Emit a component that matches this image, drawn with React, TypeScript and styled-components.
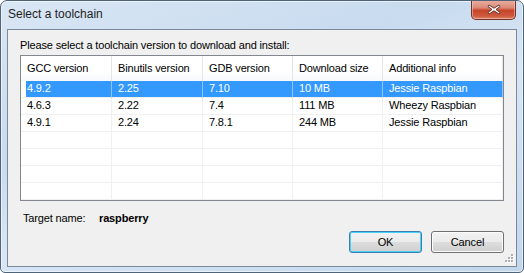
import React from 'react'
import styled, { createGlobalStyle } from 'styled-components'

const GlobalStyle = createGlobalStyle`
html, body {
  margin: 0;
  padding: 0;
  background: #ffffff;
}
`

type Toolchain = {
    gcc: string
    binutils: string
    gdb: string
    size: string
    info: string
}

const toolchains: Toolchain[] = [
    { gcc: '4.9.2', binutils: '2.25', gdb: '7.10', size: '10 MB', info: 'Jessie Raspbian' },
    { gcc: '4.6.3', binutils: '2.22', gdb: '7.4', size: '111 MB', info: 'Wheezy Raspbian' },
    { gcc: '4.9.1', binutils: '2.24', gdb: '7.8.1', size: '244 MB', info: 'Jessie Raspbian' },
]

const columns = ['GCC version', 'Binutils version', 'GDB version', 'Download size', 'Additional info']
const EMPTY_ROWS = 4

export default function App() {
    return (
        <>
            <GlobalStyle />
            <Window>
                <TitleBar>
                    <Title>Select a toolchain</Title>
                    <CloseButton aria-label="Close">
                        <svg width="14" height="11" viewBox="0 0 14 11">
                            <path d="M2 1 L7 4.2 L12 1 L13 2.5 L9 5.5 L13 8.5 L12 10 L7 6.8 L2 10 L1 8.5 L5 5.5 L1 2.5 Z"
                                fill="#ffffff" stroke="#5a2a22" strokeWidth="0.9" strokeLinejoin="round" />
                        </svg>
                    </CloseButton>
                </TitleBar>
                <FrameBody>
                    <Client>
                        <Prompt>Please select a toolchain version to download and install:</Prompt>
                        <ListView>
                            <HeaderRow>
                                {columns.map(c => <HeaderCell key={c}>{c}</HeaderCell>)}
                            </HeaderRow>
                            {toolchains.map((t, i) => (
                                <Row key={i} $selected={i === 0}>
                                    <Cell $selected={i === 0}>{t.gcc}</Cell>
                                    <Cell $selected={i === 0}>{t.binutils}</Cell>
                                    <Cell $selected={i === 0}>{t.gdb}</Cell>
                                    <Cell $selected={i === 0}>{t.size}</Cell>
                                    <Cell $selected={i === 0}>{t.info}</Cell>
                                </Row>
                            ))}
                            {Array.from({ length: EMPTY_ROWS }).map((_, i) => (
                                <Row key={'e' + i}>
                                    {columns.map(c => <Cell key={c} />)}
                                </Row>
                            ))}
                        </ListView>
                        <TargetRow>
                            <TargetLabel>Target name:</TargetLabel>
                            <TargetValue>raspberry</TargetValue>
                        </TargetRow>
                        <ButtonRow>
                            <Button $default>OK</Button>
                            <Button>Cancel</Button>
                        </ButtonRow>
                        <SizeGrip width="10" height="10" viewBox="0 0 10 10">
                            {[[7, 0], [4, 3], [7, 3], [1, 6], [4, 6], [7, 6]].map(([x, y]) => (
                                <g key={x + '-' + y}>
                                    <rect x={x + 1} y={y + 1} width="2" height="2" fill="#ffffff" />
                                    <rect x={x} y={y} width="2" height="2" fill="#a9afb5" />
                                </g>
                            ))}
                        </SizeGrip>
                    </Client>
                </FrameBody>
            </Window>
        </>
    )
}

const Window = styled.div`
box-sizing: border-box;
width: 524px;
height: 273px;
display: flex;
flex-direction: column;
border: 1px solid #4f6479;
border-radius: 7px 7px 5px 5px;
background: linear-gradient(160deg, #d9e6f4 0%, #c8dbef 35%, #d8e6f5 55%, #c2d6ec 100%);
box-shadow: inset 0 0 0 1px rgba(255, 255, 255, 0.55);
overflow: hidden;
font-family: "Liberation Sans", Arial, sans-serif;
`

const TitleBar = styled.div`
height: 28px;
display: flex;
flex-direction: row;
justify-content: space-between;
align-items: flex-start;
padding: 0 7px 0 7px;
`

const Title = styled.div`
padding-top: 6px;
font-family: "Liberation Sans", Arial, sans-serif;
font-size: 12px;
line-height: 14px;
color: #1e1e1e;
`

const CloseButton = styled.div`
box-sizing: border-box;
width: 45px;
height: 20px;
margin-top: -1px;
display: flex;
align-items: center;
justify-content: center;
border: 1px solid #6f3328;
border-top: none;
border-radius: 0 0 5px 5px;
background: linear-gradient(180deg, #eab0a3 0%, #dc8a78 40%, #c8452b 55%, #cf5a3d 85%, #e0896c 100%);
box-shadow: inset 0 0 0 1px rgba(255, 210, 200, 0.5);
`

const FrameBody = styled.div`
flex: 1;
display: flex;
padding: 0 6px 5px 6px;
`

const Client = styled.div`
position: relative;
flex: 1;
display: flex;
flex-direction: column;
border: 1px solid #7b8a9b;
background: #f0f0f0;
padding: 9px 12px 12px 12px;
font-size: 11px;
line-height: 13px;
letter-spacing: -0.15px;
color: #000000;
`

const Prompt = styled.div`
margin-bottom: 3px;
`

const ListView = styled.div`
border: 1px solid #828790;
background: #ffffff;
`

const HeaderRow = styled.div`
display: grid;
grid-template-columns: 91px 91px 90px 90px 120px;
height: 25px;
background: linear-gradient(180deg, #ffffff 0%, #ffffff 60%, #f7f8fa 100%);
`

const HeaderCell = styled.div`
display: flex;
align-items: center;
padding-left: 6px;
border-right: 1px solid #e5e5e5;
white-space: nowrap;
`

const Row = styled.div<{ $selected?: boolean }>`
display: grid;
grid-template-columns: 91px 91px 90px 90px 120px;
height: 17px;
background: ${({ $selected }) => $selected
    ? 'linear-gradient(to right, #ffffff 5px, #3399ff 5px)'
    : '#ffffff'};
`

const Cell = styled.div<{ $selected?: boolean }>`
display: flex;
align-items: center;
padding-left: 6px;
padding-bottom: 1px;
box-sizing: border-box;
border-right: 1px solid ${({ $selected }) => $selected ? '#8cc4ff' : '#f0f0f0'};
border-bottom: 1px solid #f0f0f0;
color: ${({ $selected }) => $selected ? '#ffffff' : '#000000'};
white-space: nowrap;
`

const TargetRow = styled.div`
display: flex;
flex-direction: row;
padding-left: 3px;
margin-top: 11px;
`

const TargetLabel = styled.span`
width: 76px;
`

const TargetValue = styled.span`
font-weight: bold;
`

const ButtonRow = styled.div`
display: flex;
flex-direction: row;
justify-content: flex-end;
gap: 9px;
margin-top: 6px;
`

const Button = styled.div<{ $default?: boolean }>`
box-sizing: border-box;
width: 73px;
height: 22px;
display: flex;
align-items: center;
justify-content: center;
border: 1px solid ${({ $default }) => $default ? '#3c7fb1' : '#707070'};
border-radius: 3px;
background: linear-gradient(180deg, #f2f2f2 0%, #ebebeb 48%, #dddddd 52%, #cfcfcf 100%);
box-shadow: ${({ $default }) => $default
    ? 'inset 0 0 0 1px #48d0f8'
    : 'inset 0 0 0 1px #fcfcfc'};
font-size: 11px;
color: #000000;
`

const SizeGrip = styled.svg`
position: absolute;
right: 2px;
bottom: 2px;
`
